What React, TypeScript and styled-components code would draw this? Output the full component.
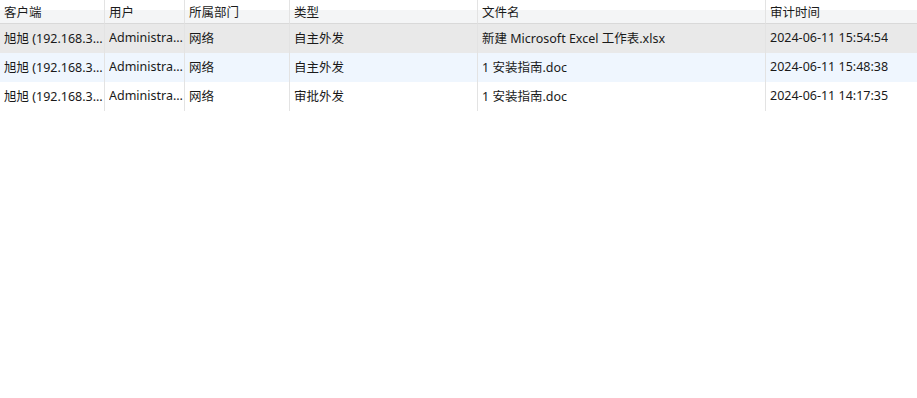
import React from 'react';
import styled, { createGlobalStyle } from 'styled-components';

const GlobalStyle = createGlobalStyle`
  html, body {
    margin: 0;
    padding: 0;
    background: #ffffff;
  }
  body {
    font-family: "Noto Sans", "Noto Sans CJK SC", sans-serif;
    font-size: 12.5px;
    color: #1a1a1a;
  }
`;

const columns = ['105px', '80px', '105px', '188px', '288px', '1fr'];

const Table = styled.div`
  display: grid;
  grid-template-columns: ${columns.join(' ')};
  width: 100%;
`;

const HeaderCell = styled.div<{ $last?: boolean }>`
  height: 24px;
  display: flex;
  align-items: center;
  padding: 0 4px 1px;
  box-sizing: border-box;
  background: linear-gradient(#ffffff 0, #ffffff 10px, #f4f5f6 10px, #f4f5f6 100%);
  border-bottom: 1px solid #d9d9d9;
  border-right: ${(p) => (p.$last ? 'none' : '1px solid #e3e3e3')};
  white-space: nowrap;
  overflow: hidden;
`;

const Cell = styled.div<{ $bg: string; $last?: boolean }>`
  height: 29px;
  display: flex;
  align-items: center;
  padding: 0 1px 2px 4px;
  box-sizing: border-box;
  background: ${(p) => p.$bg};
  border-right: ${(p) => (p.$last ? 'none' : '1px solid #e3e3e3')};
  min-width: 0;
`;

const CellText = styled.span`
  display: block;
  white-space: nowrap;
  overflow: hidden;
  text-overflow: ellipsis;
  min-width: 0;
`;

const headers = ['客户端', '用户', '所属部门', '类型', '文件名', '审计时间'];

const rows = [
  {
    bg: '#e9e9e9',
    cells: ['旭旭 (192.168.3.25)', 'Administrator', '网络', '自主外发', '新建 Microsoft Excel 工作表.xlsx', '2024-06-11 15:54:54'],
  },
  {
    bg: '#eff6fe',
    cells: ['旭旭 (192.168.3.25)', 'Administrator', '网络', '自主外发', '1 安装指南.doc', '2024-06-11 15:48:38'],
  },
  {
    bg: '#ffffff',
    cells: ['旭旭 (192.168.3.25)', 'Administrator', '网络', '审批外发', '1 安装指南.doc', '2024-06-11 14:17:35'],
  },
];

export default function App() {
  return (
    <>
      <GlobalStyle />
      <Table>
        {headers.map((h, i) => (
          <HeaderCell key={h} $last={i === headers.length - 1}>
            {h}
          </HeaderCell>
        ))}
        {rows.map((row, r) =>
          row.cells.map((c, i) => (
            <Cell key={`${r}-${i}`} $bg={row.bg} $last={i === row.cells.length - 1}>
              <CellText>{c}</CellText>
            </Cell>
          ))
        )}
      </Table>
    </>
  );
}
